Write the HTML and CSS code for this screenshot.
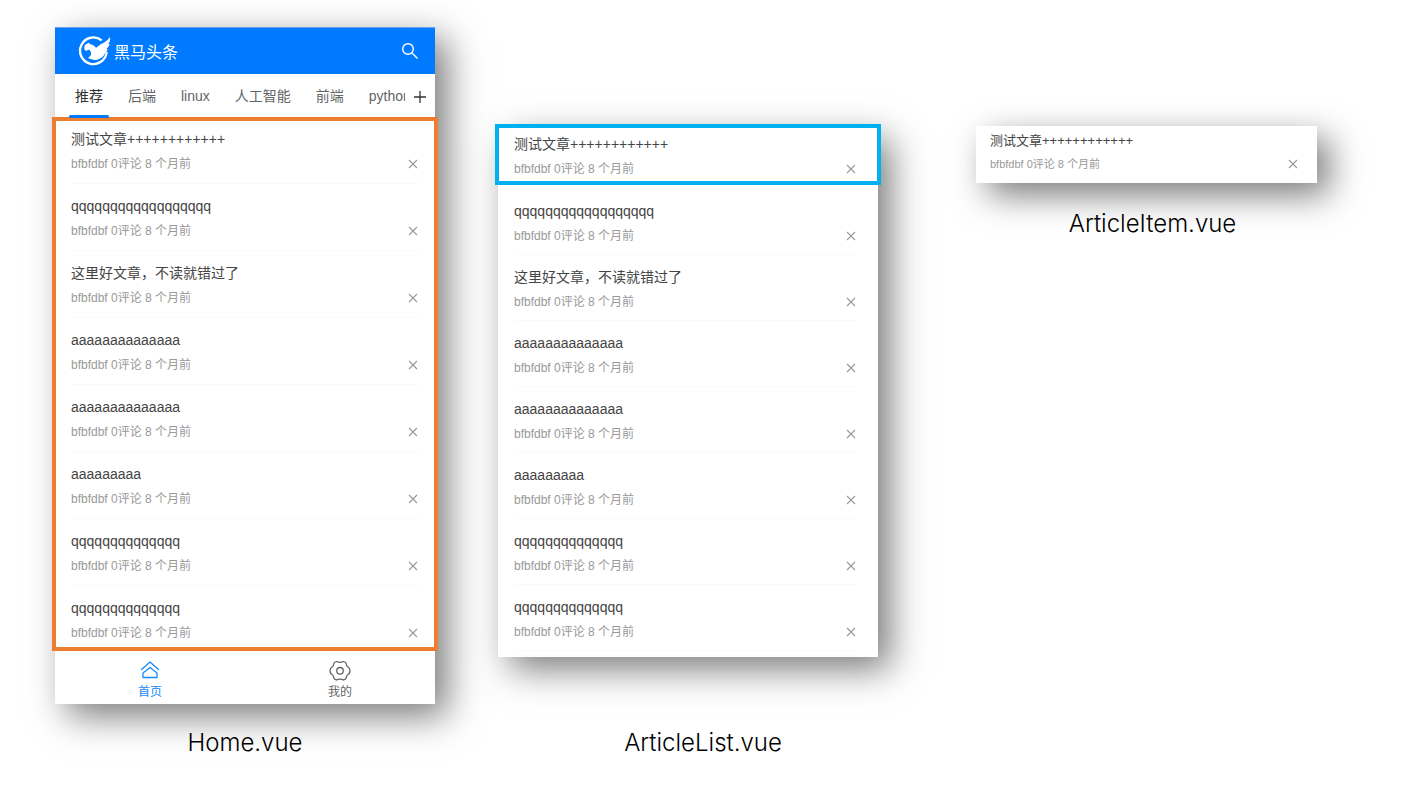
FILE: index.html
```html
<!DOCTYPE html>
<html lang="zh-CN">
<head>
<meta charset="utf-8">
<title>组件拆分</title>
<link rel="stylesheet" href="styles.css">
</head>
<body>
<svg class="sprite" aria-hidden="true">
  <symbol id="close" viewBox="0 0 12 12"><path d="M2 2l8 8M10 2l-8 8" fill="none" stroke="currentColor" stroke-width="1.1"/></symbol>
</svg>
<main class="board">
  <figure class="panel">
    <div class="card">
      <header class="header">
        <div class="brand">
          <svg class="logo" viewBox="12 14 102 90" aria-hidden="true">
            <path d="M83 27A40 40 0 1 0 98 62" fill="none" stroke="#fff" stroke-width="7"/>
            <path d="M31 52C30 46 32 41 37 38L45 34L48 39C55 39 60 43 66 49C72 47 74 42 82 38C92 34 100 28 108 17C110 26 107 33 103 37L107 39C105 45 102 48 98 52L101 55C98 60 96 63 93 66C90 75 82 82 70 85C60 87 50 84 42 79C50 76 54 68 49 59C46 54 42 55 38 58C34 58 32 56 31 52Z" fill="#fff"/>
          </svg>
          <span>黑马头条</span>
        </div>
        <button class="icon-button" aria-label="搜索">
          <svg width="18" height="18" viewBox="0 0 18 18" fill="none" stroke="#fff" stroke-width="1.4"><circle cx="7" cy="7" r="5.3"/><path d="M11 11l5.500 5.500"/></svg>
        </button>
      </header>
      <div class="channels">
        <nav class="tabs">
          <a class="tab tab-active" href="#">推荐</a>
          <a class="tab" href="#">后端</a>
          <a class="tab" href="#">linux</a>
          <a class="tab" href="#">人工智能</a>
          <a class="tab" href="#">前端</a>
          <a class="tab" href="#">python</a>
        </nav>
        <button class="add" aria-label="添加频道">
          <svg width="12" height="12" viewBox="0 0 12 12" fill="none" stroke="#333" stroke-width="1.3"><path d="M6 0v12M0 6h12"/></svg>
        </button>
      </div>
      <ul class="list list-framed">
        <li class="article"><h3 class="title">测试文章++++++++++++</h3><div class="meta"><span>bfbfdbf 0评论 8 个月前</span><button class="close" aria-label="关闭"><svg><use href="#close"/></svg></button></div></li>
        <li class="article"><h3 class="title">qqqqqqqqqqqqqqqqqq</h3><div class="meta"><span>bfbfdbf 0评论 8 个月前</span><button class="close" aria-label="关闭"><svg><use href="#close"/></svg></button></div></li>
        <li class="article"><h3 class="title">这里好文章，不读就错过了</h3><div class="meta"><span>bfbfdbf 0评论 8 个月前</span><button class="close" aria-label="关闭"><svg><use href="#close"/></svg></button></div></li>
        <li class="article"><h3 class="title">aaaaaaaaaaaaaa</h3><div class="meta"><span>bfbfdbf 0评论 8 个月前</span><button class="close" aria-label="关闭"><svg><use href="#close"/></svg></button></div></li>
        <li class="article"><h3 class="title">aaaaaaaaaaaaaa</h3><div class="meta"><span>bfbfdbf 0评论 8 个月前</span><button class="close" aria-label="关闭"><svg><use href="#close"/></svg></button></div></li>
        <li class="article"><h3 class="title">aaaaaaaaa</h3><div class="meta"><span>bfbfdbf 0评论 8 个月前</span><button class="close" aria-label="关闭"><svg><use href="#close"/></svg></button></div></li>
        <li class="article"><h3 class="title">qqqqqqqqqqqqqq</h3><div class="meta"><span>bfbfdbf 0评论 8 个月前</span><button class="close" aria-label="关闭"><svg><use href="#close"/></svg></button></div></li>
        <li class="article"><h3 class="title">qqqqqqqqqqqqqq</h3><div class="meta"><span>bfbfdbf 0评论 8 个月前</span><button class="close" aria-label="关闭"><svg><use href="#close"/></svg></button></div></li>
      </ul>
      <nav class="tabbar">
        <a class="tabbar-item tabbar-active" href="#">
          <svg width="22" height="22" viewBox="0 0 22 22" fill="none" stroke="currentColor" stroke-width="1.3" stroke-linejoin="round" stroke-linecap="round"><path d="M2.500 9.500L11 2L19.500 9.500"/><path d="M4 13L11 7.500L18 13V17.500H4Z"/></svg>
          <span>首页</span>
        </a>
        <a class="tabbar-item" href="#">
          <svg width="22" height="22" viewBox="0 0 22 22" fill="none" stroke="currentColor" stroke-width="1.3" stroke-linejoin="round"><path d="M7.600 1.500Q11 3.300 14.400 1.500Q17 2.300 17.200 3.600Q17.200 6.200 19.300 7.300Q21.300 9 20.900 11Q21.300 13 19.300 14.200Q17.200 15.500 17.200 17.900Q17 19.300 14.400 20Q11 18.200 7.600 20Q5 19.300 4.800 17.900Q4.800 15.500 2.700 14.200Q.700 13 1.100 11Q.700 9 2.700 7.300Q4.800 6.200 4.800 3.600Q5 2.300 7.600 1.500Z"/><circle cx="11" cy="10.800" r="3.300"/></svg>
          <span>我的</span>
        </a>
      </nav>
    </div>
    <figcaption class="caption">Home.vue</figcaption>
  </figure>

  <figure class="panel panel-list">
    <div class="card">
      <ul class="list">
        <li class="article article-framed"><h3 class="title">测试文章++++++++++++</h3><div class="meta"><span>bfbfdbf 0评论 8 个月前</span><button class="close" aria-label="关闭"><svg><use href="#close"/></svg></button></div></li>
        <li class="article"><h3 class="title">qqqqqqqqqqqqqqqqqq</h3><div class="meta"><span>bfbfdbf 0评论 8 个月前</span><button class="close" aria-label="关闭"><svg><use href="#close"/></svg></button></div></li>
        <li class="article"><h3 class="title">这里好文章，不读就错过了</h3><div class="meta"><span>bfbfdbf 0评论 8 个月前</span><button class="close" aria-label="关闭"><svg><use href="#close"/></svg></button></div></li>
        <li class="article"><h3 class="title">aaaaaaaaaaaaaa</h3><div class="meta"><span>bfbfdbf 0评论 8 个月前</span><button class="close" aria-label="关闭"><svg><use href="#close"/></svg></button></div></li>
        <li class="article"><h3 class="title">aaaaaaaaaaaaaa</h3><div class="meta"><span>bfbfdbf 0评论 8 个月前</span><button class="close" aria-label="关闭"><svg><use href="#close"/></svg></button></div></li>
        <li class="article"><h3 class="title">aaaaaaaaa</h3><div class="meta"><span>bfbfdbf 0评论 8 个月前</span><button class="close" aria-label="关闭"><svg><use href="#close"/></svg></button></div></li>
        <li class="article"><h3 class="title">qqqqqqqqqqqqqq</h3><div class="meta"><span>bfbfdbf 0评论 8 个月前</span><button class="close" aria-label="关闭"><svg><use href="#close"/></svg></button></div></li>
        <li class="article"><h3 class="title">qqqqqqqqqqqqqq</h3><div class="meta"><span>bfbfdbf 0评论 8 个月前</span><button class="close" aria-label="关闭"><svg><use href="#close"/></svg></button></div></li>
      </ul>
    </div>
    <figcaption class="caption">ArticleList.vue</figcaption>
  </figure>

  <figure class="panel panel-item">
    <div class="card">
      <article class="article"><h3 class="title">测试文章++++++++++++</h3><div class="meta"><span>bfbfdbf 0评论 8 个月前</span><button class="close" aria-label="关闭"><svg><use href="#close"/></svg></button></div></article>
    </div>
    <figcaption class="caption">ArticleItem.vue</figcaption>
  </figure>
</main>
</body>
</html>
```
FILE: styles.css
```css
* { box-sizing: border-box; }

body {
  margin: 0;
  background: #fff;
  color: #444;
  font-family: "Liberation Sans", "Noto Sans CJK SC", sans-serif;
  font-size: 14px;
}

button {
  display: flex;
  align-items: center;
  justify-content: center;
  padding: 0;
  border: 0;
  background: none;
}

a { color: inherit; text-decoration: none; }

.sprite { display: none; }

.board {
  display: grid;
  grid-template-columns: 380fr 380fr 376fr;
  column-gap: 63px;
  align-items: start;
  padding: 27px 87px 27px 55px;
}

.panel { margin: 0; min-width: 0; }
.panel-list { padding-top: 100px; }
.panel-item { padding: 99px 0 0 35px; }

.card {
  background: #fff;
  box-shadow: 12px 12px 34px rgba(0, 0, 0, .52);
}

.caption {
  margin-top: 23px;
  color: #000;
  font-family: Inter, "Open Sans", sans-serif;
  font-size: 24px;
  font-weight: 300;
  line-height: 32px;
  text-align: center;
}
.panel-list .caption { margin-top: 70px; padding-left: 30px; }
.panel-item .caption { margin-top: 25px; padding-left: 12px; }

/* Header */
.header {
  display: flex;
  align-items: center;
  justify-content: space-between;
  height: 47px;
  padding: 0 16px 0 23px;
  border-top: 1px solid #6aa5e0;
  background: #007bff;
}
.brand {
  display: flex;
  align-items: center;
  gap: 2px;
  color: #fff;
  font-size: 16px;
}
.logo { width: 34px; height: 30px; }

/* Channel tabs */
.channels { display: flex; height: 46px; }
.tabs {
  display: flex;
  flex: 1;
  gap: 1px;
  min-width: 0;
  padding-left: 8px;
  overflow: hidden;
}
.tab {
  position: relative;
  flex: none;
  padding: 0 12px;
  color: #646566;
  line-height: 44px;
}
.tab-active { color: #333; }
.tab-active::after {
  content: "";
  position: absolute;
  right: 6px;
  bottom: 2px;
  left: 6px;
  height: 3px;
  border-radius: 3px;
  background: #007bff;
}
.add { width: 30px; height: 46px; }

/* Articles */
.list { margin: 0; padding: 0; list-style: none; }
.list-framed {
  padding-bottom: 5px;
  outline: 4px solid #ed7d31;
  outline-offset: -1px;
}
.article {
  padding: 11px 16px 0;
}
.title {
  margin: 0;
  color: #444;
  font-size: 14px;
  font-weight: 400;
  line-height: 22px;
}
.meta {
  display: flex;
  align-items: center;
  justify-content: space-between;
  padding: 4px 0 9px;
  border-bottom: 1px solid #fafafa;
  color: #999;
  font-size: 12px;
  line-height: 20px;
}
.close { color: #999; }
.close svg { width: 12px; height: 12px; }

.list-framed .article:first-child { padding-top: 8px; }
.list-framed .article:last-child .meta { padding-bottom: 0; border-bottom: 0; }

.panel-list .list { padding-bottom: 6px; }
.panel-list .article { padding-right: 21px; }
.panel-list .meta { padding-bottom: 8px; }
.panel-list .article-framed {
  margin-bottom: 7px;
  padding-top: 6px;
  outline: 4px solid #00b0f0;
  outline-offset: -1px;
}
.panel-list .article-framed .meta { padding-bottom: 3px; border-bottom: 0; }

.panel-item .article { padding: 5px 18px 10px 14px; }
.panel-item .title { font-size: 13px; line-height: 20px; }
.panel-item .meta {
  padding-bottom: 0;
  border-bottom: 0;
  font-size: 11px;
  line-height: 18px;
}

/* Bottom bar */
.tabbar { display: flex; height: 56px; }
.tabbar-item {
  display: flex;
  flex: 1;
  flex-direction: column;
  align-items: center;
  gap: 1px;
  padding-top: 12px;
  color: #646566;
  font-size: 12px;
  line-height: 18px;
}
.tabbar-active { color: #1989fa; }
```
